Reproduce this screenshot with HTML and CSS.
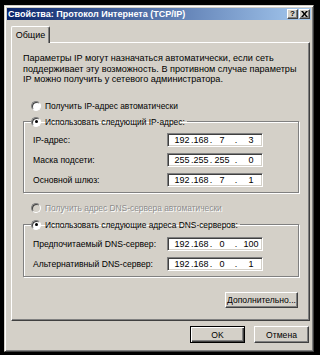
FILE: index.html
```html
<!DOCTYPE html>
<html lang="ru">
<head>
<meta charset="UTF-8">
<title>Свойства: Протокол Интернета (TCP/IP)</title>
<link rel="stylesheet" href="styles.css">
</head>
<body>

<div class="window">
    <div class="titlebar">
        <span class="title">Свойства: Протокол Интернета (TCP/IP)</span>
        <div class="title-btns">
            <span class="tbtn help">?</span>
            <span class="tbtn close">
                <svg width="7" height="6" viewBox="0 0 7 6"><path d="M0 0h2l1.5 2 1.5-2h2L4.5 3 7 6H5L3.5 4 2 6H0l2.5-3z" fill="#000"/></svg>
            </span>
        </div>
    </div>

    <div class="dlg-body">
        <div class="tabs"><div class="tab">Общие</div></div>

        <div class="panel">
            <p class="intro">Параметры IP могут назначаться автоматически, если сеть поддерживает эту возможность. В противном случае параметры IP можно получить у сетевого администратора.</p>

            <div class="radio-row"><span class="radio"></span>Получить IP-адрес автоматически</div>

            <fieldset class="group ip-group">
                <legend><span class="radio checked"></span>Использовать следующий IP-адрес:</legend>
                <div class="field-row">
                    <span class="lbl">IP-адрес:</span>
                    <div class="ipbox"><span class="o1">192</span><span class="d1">.</span><span class="o2">168</span><span class="d2">.</span><span class="o3">7</span><span class="d3">.</span><span class="o4">3</span></div>
                </div>
                <div class="field-row">
                    <span class="lbl">Маска подсети:</span>
                    <div class="ipbox"><span class="o1">255</span><span class="d1">.</span><span class="o2">255</span><span class="d2">.</span><span class="o3">255</span><span class="d3">.</span><span class="o4">0</span></div>
                </div>
                <div class="field-row">
                    <span class="lbl">Основной шлюз:</span>
                    <div class="ipbox"><span class="o1">192</span><span class="d1">.</span><span class="o2">168</span><span class="d2">.</span><span class="o3">7</span><span class="d3">.</span><span class="o4">1</span></div>
                </div>
            </fieldset>

            <div class="radio-row disabled"><span class="radio"></span>Получить адрес DNS-сервера автоматически</div>

            <fieldset class="group dns-group">
                <legend><span class="radio checked"></span>Использовать следующие адреса DNS-серверов:</legend>
                <div class="field-row">
                    <span class="lbl">Предпочитаемый DNS-сервер:</span>
                    <div class="ipbox"><span class="o1">192</span><span class="d1">.</span><span class="o2">168</span><span class="d2">.</span><span class="o3">0</span><span class="d3">.</span><span class="o4">100</span></div>
                </div>
                <div class="field-row">
                    <span class="lbl">Альтернативный DNS-сервер:</span>
                    <div class="ipbox"><span class="o1">192</span><span class="d1">.</span><span class="o2">168</span><span class="d2">.</span><span class="o3">0</span><span class="d3">.</span><span class="o4">1</span></div>
                </div>
            </fieldset>

            <div class="adv-row"><button class="btn adv">Дополнительно...</button></div>
        </div>

        <div class="actions">
            <button class="btn default">OK</button>
            <button class="btn">Отмена</button>
        </div>
    </div>
</div>

</body>
</html>
```

FILE: styles.css
```css
body {
    margin: 0;
    background: #000;
    width: 320px;
    height: 355px;
    overflow: hidden;
    font-family: "Liberation Sans", Arial, sans-serif;
    font-size: 9px;
    color: #000;
}

.window {
    margin: 5px 0 0 4px;
    width: 310px;
    height: 347px;
    box-sizing: border-box;
    background: #d4d0c8;
    border: 1px solid;
    border-color: #d4d0c8 #404040 #404040 #d4d0c8;
    box-shadow: inset 1px 1px 0 #fff, inset -1px -1px 0 #808080;
    padding: 2px;
}

.titlebar {
    height: 12px;
    background: linear-gradient(to right, #0a246a, #a6caf0);
    display: flex;
    align-items: center;
    justify-content: space-between;
    padding-left: 1px;
}
.title {
    color: #fff;
    font-weight: bold;
    font-size: 9px;
    white-space: nowrap;
}
.title-btns { display: flex; gap: 1px; margin-right: 1px; }
.tbtn {
    width: 11px;
    height: 10px;
    box-sizing: border-box;
    background: #d4d0c8;
    border: 1px solid;
    border-color: #fff #404040 #404040 #fff;
    box-shadow: inset -1px -1px 0 #808080;
    display: flex;
    align-items: center;
    justify-content: center;
    font-weight: bold;
    font-size: 8px;
    line-height: 1;
}

.dlg-body {
    padding: 6px 1px 0 4px;
}

.tabs { display: flex; height: 16px; position: relative; z-index: 1; }
.tab {
    width: 39px;
    height: 17px;
    box-sizing: border-box;
    background: #d4d0c8;
    border-left: 1px solid #fff;
    border-top: 1px solid #fff;
    border-right: 1px solid #404040;
    box-shadow: inset -1px 0 0 #808080;
    border-radius: 2px 2px 0 0;
    text-align: center;
    line-height: 16px;
}

.panel {
    height: 279px;
    box-sizing: border-box;
    border-left: 1px solid #fff;
    border-top: 1px solid #fff;
    border-right: 1px solid #404040;
    border-bottom: 1px solid #404040;
    box-shadow: inset -1px -1px 0 #808080;
    padding: 10px 11px 0 11px;
}

.intro {
    margin: 0;
    line-height: 10.5px;
    width: 274px;
    font-size: 9.1px;
}

.radio-row {
    display: flex;
    align-items: center;
    height: 12px;
    margin-top: 15px;
    padding-left: 8px;
    font-size: 8.4px;
}
.radio-row.disabled {
    color: #8c8c8c;
    text-shadow: 1px 1px 0 #fff;
    margin-top: 9px;
}

.radio {
    width: 8px;
    height: 8px;
    border-radius: 50%;
    background: #fff;
    border: 1px solid;
    border-color: #808080 #fff #fff #808080;
    box-shadow: inset 1px 1px 0 #404040;
    margin-right: 4px;
    display: inline-flex;
    align-items: center;
    justify-content: center;
    flex-shrink: 0;
}
.radio.checked::after {
    content: "";
    width: 3px;
    height: 3px;
    border-radius: 50%;
    background: #000;
}
.disabled .radio { background: #d4d0c8; }

.group {
    margin: 4px 0 0 0;
    width: 276px;
    box-sizing: border-box;
    border: 1px solid #808080;
    box-shadow: 1px 1px 0 #fff, inset 1px 1px 0 #fff;
    padding: 5px 0 5px 9px;
}
.dns-group { margin-top: 5px; padding-top: 6px; }
.group legend {
    display: flex;
    align-items: center;
    height: 12px;
    padding: 0 2px 0 0;
    margin-left: -2px;
    font-size: 8.4px;
}

.field-row {
    display: flex;
    align-items: center;
    height: 14px;
    margin-bottom: 6px;
}
.field-row:last-child { margin-bottom: 0; }
.lbl { width: 134px; font-size: 8.6px; }

.ipbox {
    width: 96px;
    height: 14px;
    box-sizing: border-box;
    background: #fff;
    border: 1px solid;
    border-color: #808080 #fff #fff #808080;
    box-shadow: inset 1px 1px 0 #404040, inset -1px -1px 0 #d4d0c8;
    display: flex;
    align-items: center;
    padding-left: 5px;
    font-size: 9px;
}
.ipbox span { display: inline-block; text-align: center; }
.o1 { width: 18px; }
.d1 { width: 2px; }
.o2 { width: 16px; }
.d2 { width: 4px; }
.o3 { width: 18px; }
.d3 { width: 10px; }
.o4 { width: 20px; }

.adv-row {
    display: flex;
    justify-content: flex-end;
    width: 275px;
    margin-top: 15px;
}

.btn {
    font-family: "Liberation Sans", Arial, sans-serif;
    font-size: 8.6px;
    color: #000;
    background: #d4d0c8;
    height: 17px;
    box-sizing: border-box;
    border: 1px solid;
    border-color: #fff #404040 #404040 #fff;
    box-shadow: inset -1px -1px 0 #808080;
    padding: 0;
    margin: 0;
}
.adv { width: 73px; height: 16px; }

.actions {
    display: flex;
    justify-content: flex-end;
    gap: 9px;
    margin-top: 5px;
    padding-right: 1px;
}
.actions .btn { width: 55px; }
.btn.default {
    border: 1px solid #000;
    box-shadow: inset 1px 1px 0 #fff, inset -1px -1px 0 #404040, inset -2px -2px 0 #808080;
}
```
